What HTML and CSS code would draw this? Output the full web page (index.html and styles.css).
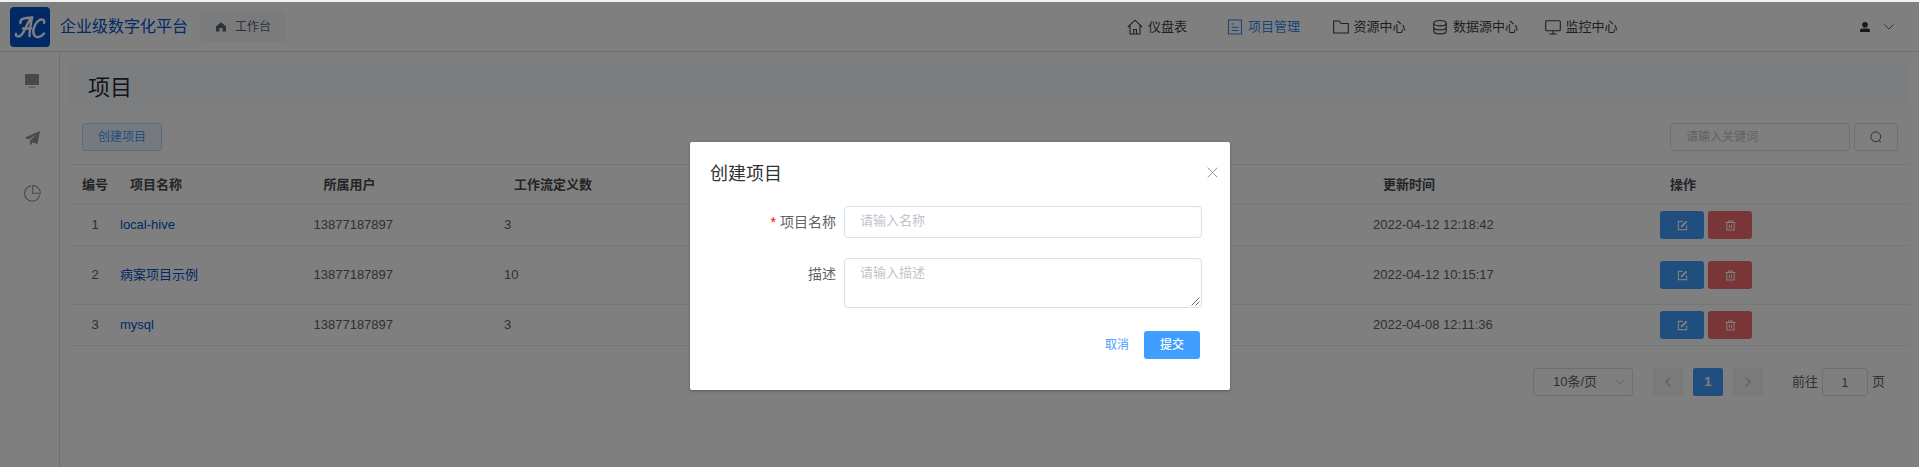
FILE: index.html
```html
<!DOCTYPE html>
<html lang="zh-CN">
<head>
<meta charset="utf-8">
<title>企业级数字化平台</title>
<link rel="stylesheet" href="styles.css">
</head>
<body>
<svg class="defs" width="0" height="0">
  <symbol id="edit" viewBox="0 0 12 12"><path d="M6.2 1.500H1.500v9h9V6" fill="none" stroke="currentColor" stroke-width="1.200"/><path d="M4 8l.5-2L9.700.8l1.500 1.500L6 7.500z" fill="currentColor"/></symbol>
  <symbol id="trash" viewBox="0 0 12 12"><path d="M.5 2.600h11M4 2.300V1h4v1.300M2 2.800v8.200h8V2.800M4.800 4.800v4.200M7.200 4.800v4.200" fill="none" stroke="currentColor" stroke-width="1.100"/></symbol>
</svg>
<header class="header">
  <svg class="logo" viewBox="0 0 40 40"><rect width="40" height="40" rx="4" fill="#0052cc"/><g fill="none" stroke="#fff" stroke-width="2.400" stroke-linecap="round" stroke-linejoin="round"><path d="M10.500 16c-1-4.500 4-5 12-5.500M22 10.500C16.500 15 14 29.500 8.500 29.500c-2.500 0-3-1-2.500-2.500M13 21.500h8M22 11c-1 5-2.500 12-2.500 18"/><path d="M34 16c1.500-4-3.500-4.500-6.500-1.500-4 4-5.500 10.500-3 14 2.500 3 6.500 1.500 9.500-2"/></g></svg>
  <div class="brand">企业级数字化平台</div>
  <div class="tag"><svg width="10" height="10" viewBox="0 0 10 10"><path d="M5 .3L10 4.600V9.500H6.500V6h-3v3.500H0V4.600z" fill="#606266"/></svg><span>工作台</span></div>
  <nav class="nav">
    <a class="n1"><svg width="16" height="16" viewBox="0 0 16 16"><path d="M.8 8L8 1.200 15.200 8M3 6.500V15h10V6.500M6.600 15v-4.500h2.800V15"/></svg>仪盘表</a>
    <a class="n2 active"><svg width="16" height="16" viewBox="0 0 16 16"><path d="M1.500 1h13v14h-13zM4.500 5h2.500M4.500 8.300h7M4.500 11.500h7"/></svg>项目管理</a>
    <a class="n3"><svg width="16" height="16" viewBox="0 0 16 16"><path d="M.7 2h5.500l2 2.500h7.100V14H.7z"/></svg>资源中心</a>
    <a class="n4"><svg width="16" height="16" viewBox="0 0 16 16"><ellipse cx="8" cy="4.200" rx="6.200" ry="2.700"/><path d="M1.800 4.200v8c0 3.600 12.400 3.600 12.400 0v-8M1.800 8.200c0 3.600 12.400 3.600 12.400 0"/></svg>数据源中心</a>
    <a class="n5"><svg width="16" height="16" viewBox="0 0 16 16"><rect x=".7" y="1.700" width="14.600" height="10" rx="1"/><path d="M8 12v3M4.200 15h7.600"/></svg>监控中心</a>
  </nav>
  <div class="user"><svg width="10" height="10" viewBox="0 0 10 10"><circle cx="5" cy="2.800" r="2.800" fill="#303133"/><path d="M0 10V8.500Q0 6.400 2 6.400h6q2 0 2 2.100V10z" fill="#303133"/></svg><svg width="10" height="6" viewBox="0 0 10 6"><path d="M.5.5L5 5 9.500.5" fill="none" stroke="#606266"/></svg></div>
</header>
<div class="body">
  <aside class="side">
    <svg width="14" height="14" viewBox="0 0 14 14"><path d="M0 0h14v11H0z" fill="#909399"/><path d="M2.500 13.500q4.500-2 9 0z" fill="#909399"/></svg>
    <svg width="15" height="15" viewBox="0 0 15 15"><path d="M15 0L0 6.500l3.500 2L12 3 5 9.500V15l2.500-3.500 5 1.500z" fill="#909399"/></svg>
    <svg width="17" height="17" viewBox="0 0 17 17"><path d="M7 .9A7.700 7.700 0 1 0 15.800 10M8.700.6v7.700h7.700A7.700 7.700 0 0 0 8.700.6z" fill="none" stroke="#909399" stroke-width="1.100"/></svg>
  </aside>
  <main class="main">
    <div class="banner">项目</div>
    <div class="toolbar">
      <button class="create">创建项目</button>
      <div class="search"><div class="kw">请输入关键词</div><button class="go"><svg width="12" height="12" viewBox="0 0 12 12"><circle cx="5.800" cy="5.800" r="4.900"/><path d="M9 9.500l2 1.700"/></svg></button></div>
    </div>
    <div class="table">
      <div class="row head"><span>编号</span><span>项目名称</span><span>所属用户</span><span>工作流定义数</span><span>更新时间</span><span>操作</span></div>
      <div class="row"><span>1</span><a>local-hive</a><span>13877187897</span><span>3</span><span>2022-04-12 12:18:42</span><span class="ops"><i class="op"><svg><use href="#edit"/></svg></i><i class="op del"><svg><use href="#trash"/></svg></i></span></div>
      <div class="row tall"><span>2</span><a>病案项目示例</a><span>13877187897</span><span>10</span><span>2022-04-12 10:15:17</span><span class="ops"><i class="op"><svg><use href="#edit"/></svg></i><i class="op del"><svg><use href="#trash"/></svg></i></span></div>
      <div class="row"><span>3</span><a>mysql</a><span>13877187897</span><span>3</span><span>2022-04-08 12:11:36</span><span class="ops"><i class="op"><svg><use href="#edit"/></svg></i><i class="op del"><svg><use href="#trash"/></svg></i></span></div>
    </div>
    <div class="pager">
      <div class="size">10条/页<svg width="10" height="6" viewBox="0 0 10 6"><path d="M.8.5L5 5 9.200.5" fill="none" stroke="#c0c4cc"/></svg></div>
      <div class="pg"><svg width="6" height="10" viewBox="0 0 6 10"><path d="M5.200.7L1 5l4.200 4.300"/></svg></div>
      <div class="pg cur">1</div>
      <div class="pg"><svg width="6" height="10" viewBox="0 0 6 10"><path d="M.8.7L5 5 .8 9.300"/></svg></div>
      <div class="jump">前往<div class="num">1</div>页</div>
    </div>
  </main>
</div>
<div class="overlay"></div>
<section class="dialog">
  <div class="dhead"><h2>创建项目</h2><svg width="11" height="11" viewBox="0 0 11 11"><path d="M.7.7l9.600 9.600M10.300.7L.7 10.300" stroke="#909399" fill="none"/></svg></div>
  <div class="field"><label><b>*</b>项目名称</label><div class="input"><span>请输入名称</span></div></div>
  <div class="field"><label>描述</label><div class="input area"><span>请输入描述</span><svg class="grip" width="9" height="9" viewBox="0 0 9 9"><path d="M.5 8.500l8-8M4.500 8.500l4-4" stroke="#555" fill="none" stroke-width=".9"/></svg></div></div>
  <div class="foot"><span class="cancel">取消</span><button class="submit">提交</button></div>
</section>
</body>
</html>
```
FILE: styles.css
```css
* { box-sizing: border-box; }
body { margin: 0; height: 467px; overflow: hidden; background: #fff; color: #606266; font: 13px/20px "Liberation Sans", "Noto Sans CJK SC", sans-serif; border-top: 2px solid #f0f1f2; }
button { font: inherit; padding: 0; margin: 0; }
svg { display: block; flex: none; }
.defs { position: absolute; }
.header { height: 50px; border-bottom: 1px solid #dcdfe6; display: flex; align-items: center; padding-left: 10px; }
.logo { width: 40px; height: 40px; }
.brand { margin-left: 10px; width: 140px; font-size: 16px; color: #0052cc; white-space: nowrap; }
.tag { width: 86px; height: 30px; border-radius: 4px; background: #f4f6fa; display: flex; align-items: center; padding-left: 16px; gap: 9px; font-size: 12px; }
.nav { display: flex; margin-left: 841px; padding-top: 1px; color: #3c3e42; }
.nav a { display: flex; align-items: center; gap: 5px; white-space: nowrap; }
.nav svg { fill: none; stroke: currentColor; stroke-width: 1.1; }
.nav .active { color: #2d8cf0; }
.n1 { width: 100px; }
.n2 { width: 105.5px; }
.n3 { width: 99.5px; }
.n4 { width: 112.5px; }
.n5 { width: 74px; }
.user { display: flex; align-items: center; gap: 14px; margin-left: auto; margin-right: 25px; }
.body { display: flex; height: 415px; }
.side { width: 60px; border-right: 1px solid #dcdfe6; display: flex; flex-direction: column; align-items: center; gap: 42px; padding: 22px 0 0 5px; }
.side svg:nth-child(2) { margin-top: 1px; }
.side svg:nth-child(3) { margin-top: -3px; }
.main { width: 1840px; margin: 10px 9px 0 10px; }
.banner { height: 48px; background: #f8fafd; border-radius: 4px; font-size: 22px; line-height: 52px; padding-left: 18px; color: #1f2d3d; }
.toolbar { display: flex; justify-content: space-between; padding: 13px 12px; height: 54px; font-size: 12px; }
.create { width: 80px; height: 28px; border: 1px solid #b3d8ff; background: #ecf5ff; color: #409eff; border-radius: 3px; }
.search { display: flex; gap: 4px; }
.kw { width: 180px; height: 28px; border: 1px solid #dcdfe6; border-radius: 4px; padding-left: 15px; line-height: 26px; color: #c0c4cc; }
.go { width: 44px; height: 28px; border: 1px solid #dcdfe6; border-radius: 3px; background: #fff; display: flex; align-items: center; justify-content: center; }
.go svg { fill: none; stroke: #606266; }
.table { border-top: 1px solid #e6e8f8; }
.row { display: grid; grid-template-columns: 50px 193.5px 190.5px 869px 287px 1fr; align-items: center; height: 41px; border-bottom: 1px solid #ebeef5; }
.row > :first-child { text-align: center; }
.row a { color: #0052cc; }
.head { height: 40px; color: #484a4e; font-weight: bold; }
.head > span:nth-child(n+2) { padding-left: 10px; }
.tall { height: 59px; }
.ops { display: flex; gap: 4px; }
.op { width: 44px; height: 28px; border-radius: 3px; background: #409eff; color: #fff; display: flex; align-items: center; justify-content: center; }
.del { background: #f56c6c; }
.op svg { width: 11px; height: 11px; }
.pager { display: flex; align-items: center; margin: 22px 25px 0 0; justify-content: flex-end; }
.size { width: 100px; height: 28px; border: 1px solid #dcdfe6; border-radius: 3px; display: flex; align-items: center; justify-content: space-between; padding: 0 7px 0 19px; margin-right: 20px; }
.pg { width: 30px; height: 28px; border-radius: 2px; background: #f4f4f5; display: flex; align-items: center; justify-content: center; margin-right: 10px; }
.pg svg { fill: none; stroke: #c0c4cc; stroke-width: 1.6; }
.cur { background: #409eff; color: #fff; font-weight: bold; }
.jump { display: flex; align-items: center; margin-left: 19px; }
.num { width: 46px; height: 28px; border: 1px solid #dcdfe6; border-radius: 3px; text-align: center; line-height: 28px; margin: 0 4px; }
.overlay { position: absolute; inset: 2px 0 0; background: rgba(0, 0, 0, .5); }
.dialog { position: absolute; left: 690px; top: 142px; width: 540px; height: 248px; background: #fff; border-radius: 2px; box-shadow: 0 1px 3px rgba(0, 0, 0, .3); padding: 20px 28px 0 20px; }
.dhead { display: flex; justify-content: space-between; height: 44px; margin-right: -16px; }
.dhead svg { margin: 5px 0 0; }
.dhead h2 { margin: 0; font-size: 18px; line-height: 24px; font-weight: normal; color: #303133; }
.field { display: flex; justify-content: space-between; margin-bottom: 20px; }
.field label { flex: none; width: 126px; text-align: right; font-size: 14px; line-height: 32px; }
.field b { color: #f00; font-weight: normal; margin-right: 4px; }
.input { position: relative; width: 358px; height: 32px; border: 1px solid #dcdfe6; border-radius: 4px; padding: 4px 15px; color: #c0c4cc; }
.area { height: 50px; }
.grip { position: absolute; right: 1px; bottom: 1px; }
.foot { display: flex; justify-content: flex-end; align-items: center; gap: 15px; font-size: 12px; padding-right: 2px; margin-top: 23px; }
.cancel { color: #409eff; }
.submit { width: 56px; height: 28px; border: 0; border-radius: 3px; background: #409eff; color: #fff; font-weight: 500; }
```
